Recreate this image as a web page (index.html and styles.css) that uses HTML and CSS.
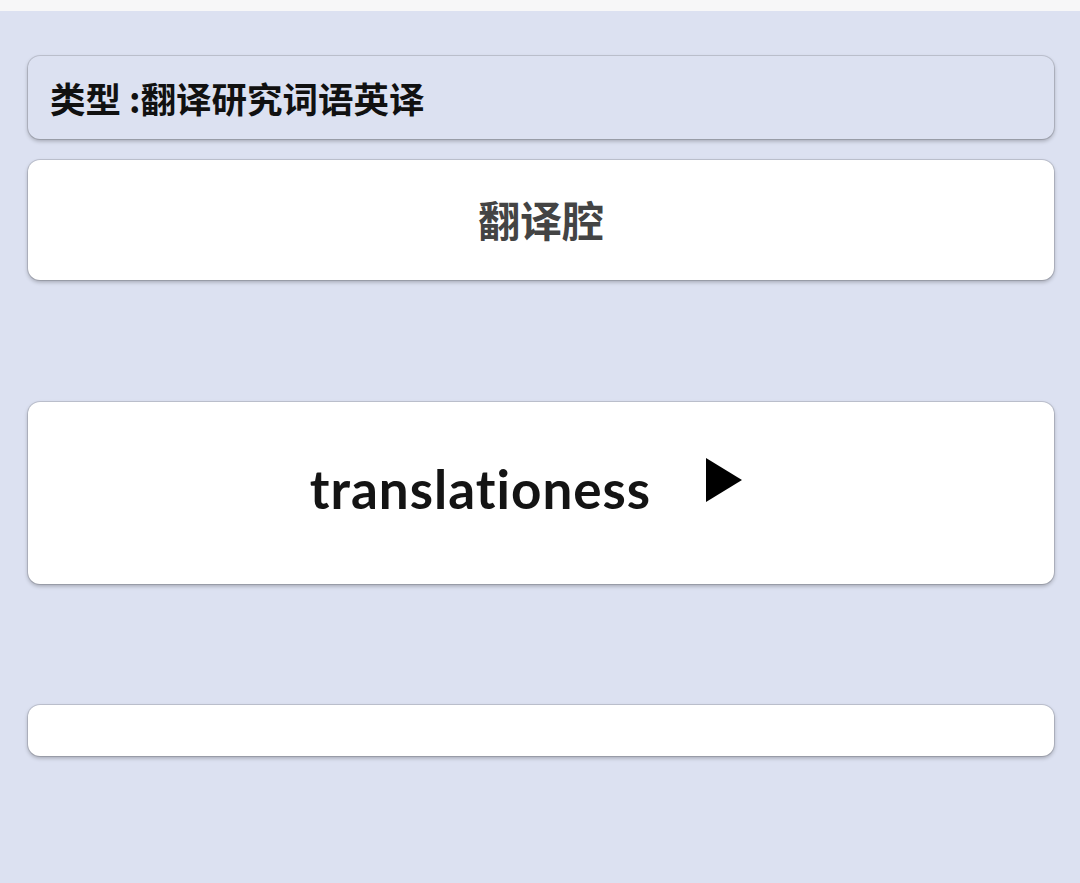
FILE: index.html
```html
<!DOCTYPE html>
<html lang="zh-CN">
<head>
    <meta charset="UTF-8">
    <meta name="viewport" content="width=device-width, initial-scale=1.0">
    <title>翻译腔</title>
    <link rel="stylesheet" href="styles.css">
</head>
<body>

    <div class="status-bar"></div>

    <div class="container">
        <div class="card type-card">
            <span class="type-label">类型 :翻译研究词语英译</span>
        </div>

        <div class="card word-card">
            <span class="word">翻译腔</span>
        </div>

        <div class="card answer-card">
            <span class="answer">translationess</span>
            <button class="play" aria-label="播放">
                <svg width="36" height="44" viewBox="0 0 36 44"><path d="M0 0 L36 22 L0 44 Z" fill="#000"/></svg>
            </button>
        </div>

        <div class="card note-card"></div>
    </div>

</body>
</html>
```

FILE: styles.css
```css
body {
    font-family: 'Lato', 'Noto Sans CJK SC', sans-serif;
    background: #dce1f1;
    margin: 0;
    padding: 0;
    min-height: 100vh;
}
.status-bar {
    height: 11px;
    background: #f7f7f8;
}
.container {
    padding: 45px 26px 0 28px;
    display: flex;
    flex-direction: column;
}
.card {
    background: #ffffff;
    border-radius: 12px;
    box-shadow: 0 0 0 1px rgba(0, 0, 0, 0.12), 0 2px 4px rgba(0, 0, 0, 0.28);
    display: flex;
    align-items: center;
}
.type-card {
    background: #dce1f1;
    height: 83px;
    padding: 0 22px;
}
.type-label {
    font-family: 'Noto Sans CJK SC', sans-serif;
    font-size: 35.5px;
    font-weight: 700;
    color: #111;
}
.word-card {
    margin-top: 21px;
    height: 120px;
    justify-content: center;
}
.word {
    font-family: 'Noto Sans CJK SC', sans-serif;
    font-size: 42px;
    font-weight: 700;
    color: #444;
    margin-bottom: 4px;
}
.answer-card {
    margin-top: 122px;
    height: 182px;
    justify-content: center;
}
.answer {
    font-size: 53px;
    font-weight: 700;
    letter-spacing: 1px;
    color: #141414;
    margin-bottom: 10px;
}
.play {
    background: none;
    border: none;
    padding: 0;
    margin: 0 30px 26px 55px;
    display: flex;
    cursor: pointer;
}
.note-card {
    margin-top: 121px;
    height: 51px;
}
```
